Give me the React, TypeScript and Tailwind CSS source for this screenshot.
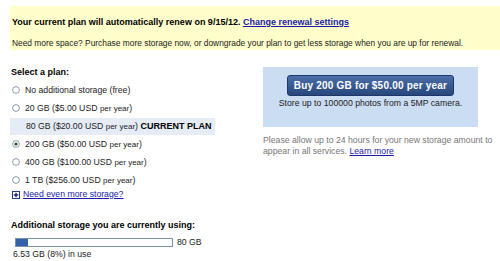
import React from 'react';

const plans = [
  { id: 'free', label: 'No additional storage (free)' },
  { id: '20', size: '20 GB', price: '$5.00 USD' },
  { id: '80', size: '80 GB', price: '$20.00 USD', current: true },
  { id: '200', size: '200 GB', price: '$50.00 USD' },
  { id: '400', size: '400 GB', price: '$100.00 USD' },
  { id: '1tb', size: '1 TB', price: '$256.00 USD' },
];

const Radio = ({ checked }: { checked?: boolean }) => (
  <svg width="8" height="8" viewBox="0 0 8 8" className="shrink-0">
    <circle cx="4" cy="4" r="3.4" fill="#fff" stroke="#8090a4" strokeWidth="0.9" />
    {checked && <circle cx="4" cy="4" r="1.6" fill="#2f4a2a" />}
  </svg>
);

const PlusBox = () => (
  <svg width="8" height="8" viewBox="0 0 8 8" className="shrink-0">
    <rect x="0.5" y="0.5" width="7" height="7" fill="#fff" stroke="#24388a" />
    <path d="M4 1.8V6.2M1.8 4H6.2" stroke="#1a2a70" strokeWidth="1.4" />
  </svg>
);

export default function App() {
  const used = 8;
  const selected = '200';

  return (
    <div className="w-[500px] h-[261px] bg-white overflow-hidden font-['Liberation_Sans',Arial,sans-serif] text-[8.7px] leading-[11px] text-[#222]">
      {/* renewal notice */}
      <div className="pt-[6px] pl-[10px]">
        <div className="h-[44px] bg-[#ffffcc] pl-[2px] pt-[11px]">
          <p className="font-bold text-[9px] text-black">
            Your current plan will automatically renew on 9/15/12.{' '}
            <a className="text-[#1a1aa8] underline">Change renewal settings</a>
          </p>
          <p className="mt-[10px] text-[8.4px]">
            Need more space? Purchase more storage now, or downgrade your plan to get less storage when you are up for renewal.
          </p>
        </div>
      </div>

      <div className="flex mt-[17px]">
        {/* plan list */}
        <div className="w-[263px] pl-[10px]">
          <p className="pl-[1px] font-bold text-[9px] text-black">Select a plan:</p>
          <div className="mt-[3px]">
            {plans.map((p) =>
              p.current ? (
                <div key={p.id} className="h-[18px] flex items-center">
                  <div className="w-[205px] h-[17px] bg-[#e6ecf6] pl-[16px] leading-[17px] whitespace-nowrap">
                    {p.size} ({p.price} <span className="text-[8px]">per year</span>){' '}
                    <span className="font-bold text-[9px] text-black">CURRENT PLAN</span>
                  </div>
                </div>
              ) : (
                <div key={p.id} className="h-[18px] flex items-center gap-[5px] pl-[2px] whitespace-nowrap">
                  <Radio checked={p.id === selected} />
                  {p.label ? (
                    <span>{p.label}</span>
                  ) : (
                    <span>
                      {p.size} ({p.price} <span className="text-[8px]">per year</span>)
                    </span>
                  )}
                </div>
              )
            )}
          </div>
          <div className="flex items-center gap-[3px] pl-[2px]">
            <PlusBox />
            <a className="text-[#1a1aa8] underline">Need even more storage?</a>
          </div>

          <p className="mt-[20px] pl-[1px] font-bold text-[9px] text-black">Additional storage you are currently using:</p>
          <div className="mt-[7px] pl-[5px] flex items-center gap-[4px]">
            <div className="w-[158px] h-[9px] border border-[#7d90ab] bg-white">
              <div className="h-full bg-[#3462a8]" style={{ width: `${used}%` }} />
            </div>
            <span className="leading-[9px]">80 GB</span>
          </div>
          <p className="mt-[2px] pl-[3px]">6.53 GB ({used}%) in use</p>
        </div>

        {/* purchase panel */}
        <div className="w-[237px]">
          <div className="w-[215px] h-[60px] bg-[#cbddf3] flex flex-col items-center pt-[8px]">
            <button className="w-[167px] h-[21px] rounded-[3px] border border-[#1d3868] bg-gradient-to-b from-[#4b6fa8] to-[#27477c] text-white font-bold text-[10px] tracking-[0.2px]">
              Buy 200 GB for $50.00 per year
            </button>
            <p className="mt-[2px]">Store up to 100000 photos from a 5MP camera.</p>
          </div>
          <p className="mt-[8px] text-[#777]">
            Please allow up to 24 hours for your new storage amount to appear in all services.{' '}
            <a className="text-[#1a1aa8] underline">Learn more</a>
          </p>
        </div>
      </div>
    </div>
  );
}
